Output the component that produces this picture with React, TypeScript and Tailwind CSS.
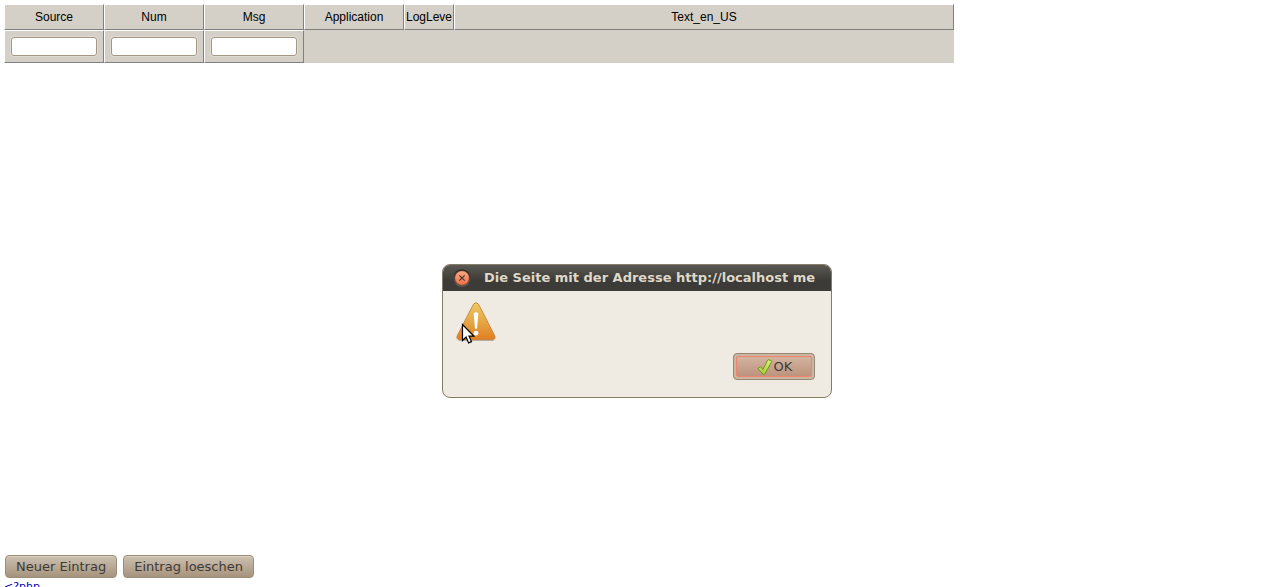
import React from "react";

const columns = [
  { name: "Source", width: "w-[100px]", filter: true },
  { name: "Num", width: "w-[100px]", filter: true },
  { name: "Msg", width: "w-[100px]", filter: true },
  { name: "Application", width: "w-[100px]", filter: false },
  { name: "LogLeve", width: "w-[50px]", filter: false },
  { name: "Text_en_US", width: "w-[500px]", filter: false },
];

const cell =
  "border-t border-l border-r border-b border-t-white border-l-white border-r-[#808080] border-b-[#808080]";

function FilterGrid() {
  return (
    <table className="w-[950px] table-fixed border-separate border-spacing-0 bg-[#d4d0c8] font-['Liberation_Sans',Arial,sans-serif] text-xs text-black">
      <thead>
        <tr className="h-[26px]">
          {columns.map((c) => (
            <th key={c.name} scope="col" className={`${cell} ${c.width} overflow-hidden p-0 text-center font-normal whitespace-nowrap`}>
              {c.name}
            </th>
          ))}
        </tr>
      </thead>
      <tbody>
        <tr className="h-[33px]">
          {columns.map((c) =>
            c.filter ? (
              <td key={c.name} className={`${cell} px-1.5 py-0`}>
                <input
                  type="text"
                  aria-label={c.name}
                  className="block h-[19px] w-full rounded-[3px] border border-[#a39783] bg-white px-1 shadow-[0_0_0_1px_#dfdad2] outline-none"
                />
              </td>
            ) : (
              <td key={c.name} className="p-0" />
            ),
          )}
        </tr>
      </tbody>
    </table>
  );
}

function ActionButton({ label }: { label: string }) {
  return (
    <button
      type="button"
      className="h-[23px] rounded-[4px] border border-[#9c8d79] bg-linear-to-b from-[#cdc1b1] to-[#a6937c] px-2.5 text-[13px] leading-5 whitespace-nowrap text-[#3c3b37] shadow-[inset_0_1px_0_#d9cfc2]"
    >
      {label}
    </button>
  );
}

function CloseIcon() {
  return (
    <svg viewBox="0 0 20 20" className="size-5" aria-hidden="true">
      <defs>
        <linearGradient id="close" x2="0" y2="1">
          <stop stopColor="#f9a988" />
          <stop offset="1" stopColor="#f07045" />
        </linearGradient>
        <linearGradient id="rim" x2="0" y2="1">
          <stop stopColor="#242320" />
          <stop offset="1" stopColor="#66645d" />
        </linearGradient>
      </defs>
      <circle cx="10" cy="10" r="8.7" fill="url(#rim)" />
      <circle cx="10" cy="10" r="7.3" fill="url(#close)" stroke="#61321f" strokeWidth=".6" />
      <path d="m7.3 7.3 5.4 5.4m0-5.4-5.4 5.4" stroke="#4b352b" strokeWidth="1.2" />
    </svg>
  );
}

function WarningIcon() {
  return (
    <svg viewBox="0 0 40 40" className="size-10" aria-hidden="true">
      <defs>
        <linearGradient id="warning" x2="0" y2="1">
          <stop stopColor="#eccb62" />
          <stop offset=".55" stopColor="#e6a343" />
          <stop offset="1" stopColor="#df7f20" />
        </linearGradient>
      </defs>
      <path d="M3 38.3h34" stroke="#b8afa3" strokeWidth="1.5" strokeLinecap="round" />
      <path
        d="M17.8 1.9q2.2-2.4 4.4 0Q23.5 3.7 38.8 34q1.2 3.5-2.6 3.5H3.8Q0 37.5 1.2 34 16.5 3.7 17.8 1.9Z"
        fill="url(#warning)"
        stroke="#c9853b"
      />
      <path d="M17.7 11.2q2.3-1.8 4.6 0l-1.2 15q-1.1 1.6-2.2 0Z" fill="#fff" />
      <circle cx="20" cy="31.2" r="2.4" fill="#fff" />
    </svg>
  );
}

function Pointer() {
  return (
    <svg viewBox="0 0 14 22" className="absolute top-[21px] left-[5px] h-[22px] w-[14px]" aria-hidden="true">
      <path d="M1.5 1.5v16l3.6-3.4 2.5 5.8 2.9-1.3-2.5-5.5h4.8Z" fill="#fff" stroke="#000" strokeWidth="1.2" />
    </svg>
  );
}

function CheckIcon() {
  return (
    <svg viewBox="0 0 18 18" className="size-[18px]" aria-hidden="true">
      <defs>
        <linearGradient id="check" x2="0" y2="1">
          <stop stopColor="#dcf08a" />
          <stop offset="1" stopColor="#a3c832" />
        </linearGradient>
      </defs>
      <path
        d="m1.8 10.6 2.9-1.9 2.2 2.9L11.6 2.2q.4-.7 1.2-.4l2.4.9q.7.4.4 1.2L8.9 16q-.8 1-1.7.3Z"
        fill="url(#check)"
        stroke="#719719"
        strokeLinejoin="round"
      />
    </svg>
  );
}

function AlertDialog() {
  return (
    <div
      role="alertdialog"
      aria-labelledby="alert-title"
      className="absolute top-[264px] left-[442px] w-[390px] overflow-hidden rounded-lg border border-[#857c68] bg-[#efebe3]"
    >
      <header className="flex h-[26px] items-center gap-3 bg-linear-to-b from-[#5b5952] to-[#3c3b37] to-60% pr-[11px] pl-[9px]">
        <button type="button" aria-label="Schließen" className="shrink-0">
          <CloseIcon />
        </button>
        <h1 id="alert-title" className="min-w-0 flex-1 text-[13px] leading-5 font-bold whitespace-nowrap text-[#dfd8c8]">
          Die Seite mit der Adresse http://localhost me
        </h1>
      </header>
      <div className="flex flex-col px-4 pt-[11px] pb-[17px]">
        <div className="relative -ml-[3px] size-10">
          <WarningIcon />
          <Pointer />
        </div>
        <button
          type="button"
          className="mt-[11px] h-[27px] w-[82px] self-end rounded-[4px] border border-[#968672] bg-[#c9b7a3] p-[2px] text-[13px] text-[#3c3b37]"
        >
          <span className="flex h-full items-center justify-center rounded-[2px] border border-[#f0836b] bg-linear-to-b from-[#d3b3a0] to-[#bd937d] leading-5">
            <CheckIcon />
            OK
          </span>
        </button>
      </div>
    </div>
  );
}

export default function App() {
  return (
    <main className="relative flex h-screen flex-col overflow-hidden bg-white font-['DejaVu_Sans',sans-serif]">
      <div className="flex-1 pt-1 pl-1">
        <FilterGrid />
      </div>
      <div className="flex h-8 shrink-0 flex-col pl-1">
        <div className="flex shrink-0 gap-1.5 pl-px">
          <ActionButton label="Neuer Eintrag" />
          <ActionButton label="Eintrag loeschen" />
        </div>
        <code className="shrink-0 font-['DejaVu_Sans',sans-serif] text-[11px] leading-[18px] text-[#0000bb]">&lt;?php</code>
      </div>
      <AlertDialog />
    </main>
  );
}
